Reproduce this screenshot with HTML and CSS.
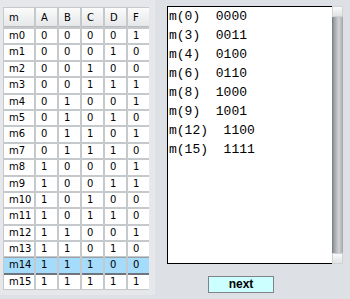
FILE: index.html
```html
<!DOCTYPE html>
<html lang="en">
<head>
<meta charset="UTF-8" />
<title>Minterms</title>
<link rel="stylesheet" href="styles.css">
</head>
<body>
<div class="app">
  <div class="table-panel">
    <div class="grid">
      <div class="hd">m</div><div class="hd">A</div><div class="hd">B</div><div class="hd">C</div><div class="hd">D</div><div class="hd">F</div>
      <div>m0</div><div>0</div><div>0</div><div>0</div><div>0</div><div>1</div>
      <div>m1</div><div>0</div><div>0</div><div>0</div><div>1</div><div>0</div>
      <div>m2</div><div>0</div><div>0</div><div>1</div><div>0</div><div>0</div>
      <div>m3</div><div>0</div><div>0</div><div>1</div><div>1</div><div>1</div>
      <div>m4</div><div>0</div><div>1</div><div>0</div><div>0</div><div>1</div>
      <div>m5</div><div>0</div><div>1</div><div>0</div><div>1</div><div>0</div>
      <div>m6</div><div>0</div><div>1</div><div>1</div><div>0</div><div>1</div>
      <div>m7</div><div>0</div><div>1</div><div>1</div><div>1</div><div>0</div>
      <div>m8</div><div>1</div><div>0</div><div>0</div><div>0</div><div>1</div>
      <div>m9</div><div>1</div><div>0</div><div>0</div><div>1</div><div>1</div>
      <div>m10</div><div>1</div><div>0</div><div>1</div><div>0</div><div>0</div>
      <div>m11</div><div>1</div><div>0</div><div>1</div><div>1</div><div>0</div>
      <div>m12</div><div>1</div><div>1</div><div>0</div><div>0</div><div>1</div>
      <div>m13</div><div>1</div><div>1</div><div>0</div><div>1</div><div>0</div>
      <div class="sel">m14</div><div class="sel">1</div><div class="sel">1</div><div class="sel">1</div><div class="sel">0</div><div class="sel">0</div>
      <div>m15</div><div>1</div><div>1</div><div>1</div><div>1</div><div>1</div>
    </div>
  </div>

  <div class="side">
    <div class="outbox">
      <pre class="output">m(0)  0000
m(3)  0011
m(4)  0100
m(6)  0110
m(8)  1000
m(9)  1001
m(12)  1100
m(15)  1111</pre>
      <div class="scroll">
        <div class="sbtn"></div>
        <div class="thumb"></div>
        <div class="sbtn"></div>
      </div>
    </div>
    <button class="next">next</button>
  </div>
</div>
</body>
</html>
```

FILE: styles.css
```css
* { margin: 0; padding: 0; box-sizing: border-box; }

html, body {
  width: 350px;
  height: 299px;
  background: #dde1e6;
  overflow: hidden;
}

.app {
  display: flex;
  height: 299px;
}

.table-panel {
  width: 155px;
  height: 295px;
  background: #e5e7ea;
  padding: 7px 0 0 3px;
}

.grid {
  display: grid;
  grid-template-columns: 30px repeat(5, 21px);
  grid-template-rows: 19px repeat(16, 14.4px);
  gap: 2px;
  padding: 1px;
  width: 146px;
  background: #c6c9cc;
  font-family: "DejaVu Sans", sans-serif;
  font-size: 10px;
  color: #000;
}

.grid div {
  background: #fff;
  padding-left: 5px;
  line-height: 14.4px;
  white-space: nowrap;
}

.grid .hd {
  background: linear-gradient(#fbfbfb, #e6e7e9);
  line-height: 19px;
  padding-left: 5px;
  border-bottom: 1px solid #b8babd;
}

.grid .sel {
  background: #a6dcfb;
  box-shadow: 0 2px 0 #6f757c, 0 -1px 0 #9aa0a6;
}

.side {
  margin-left: 12px;
  padding-top: 6px;
}

.outbox {
  display: flex;
  width: 176px;
  height: 258px;
}

.output {
  flex: 1;
  background: #fff;
  border: 1px solid #000;
  border-right: none;
  font-family: "Liberation Mono", monospace;
  font-size: 13px;
  line-height: 19px;
  color: #000;
  padding-left: 1px;
}

.scroll {
  width: 11px;
  display: flex;
  flex-direction: column;
}

.sbtn {
  height: 11px;
  background: linear-gradient(#fafafa, #e0e2e4);
  border: 1px solid #d0d3d6;
}

.thumb {
  flex: 1;
  background: linear-gradient(90deg, #8e9296, #b4b7ba 30%, #d2d4d6 60%, #a3a6a9);
  border-left: 1px solid #7d8186;
}

.next {
  display: block;
  margin: 12px 0 0 41px;
  width: 66px;
  height: 17px;
  background: #ccffff;
  border: 1px solid #808488;
  font-family: "Liberation Sans", sans-serif;
  font-weight: bold;
  font-size: 12px;
  color: #000;
  line-height: 15px;
}
```
